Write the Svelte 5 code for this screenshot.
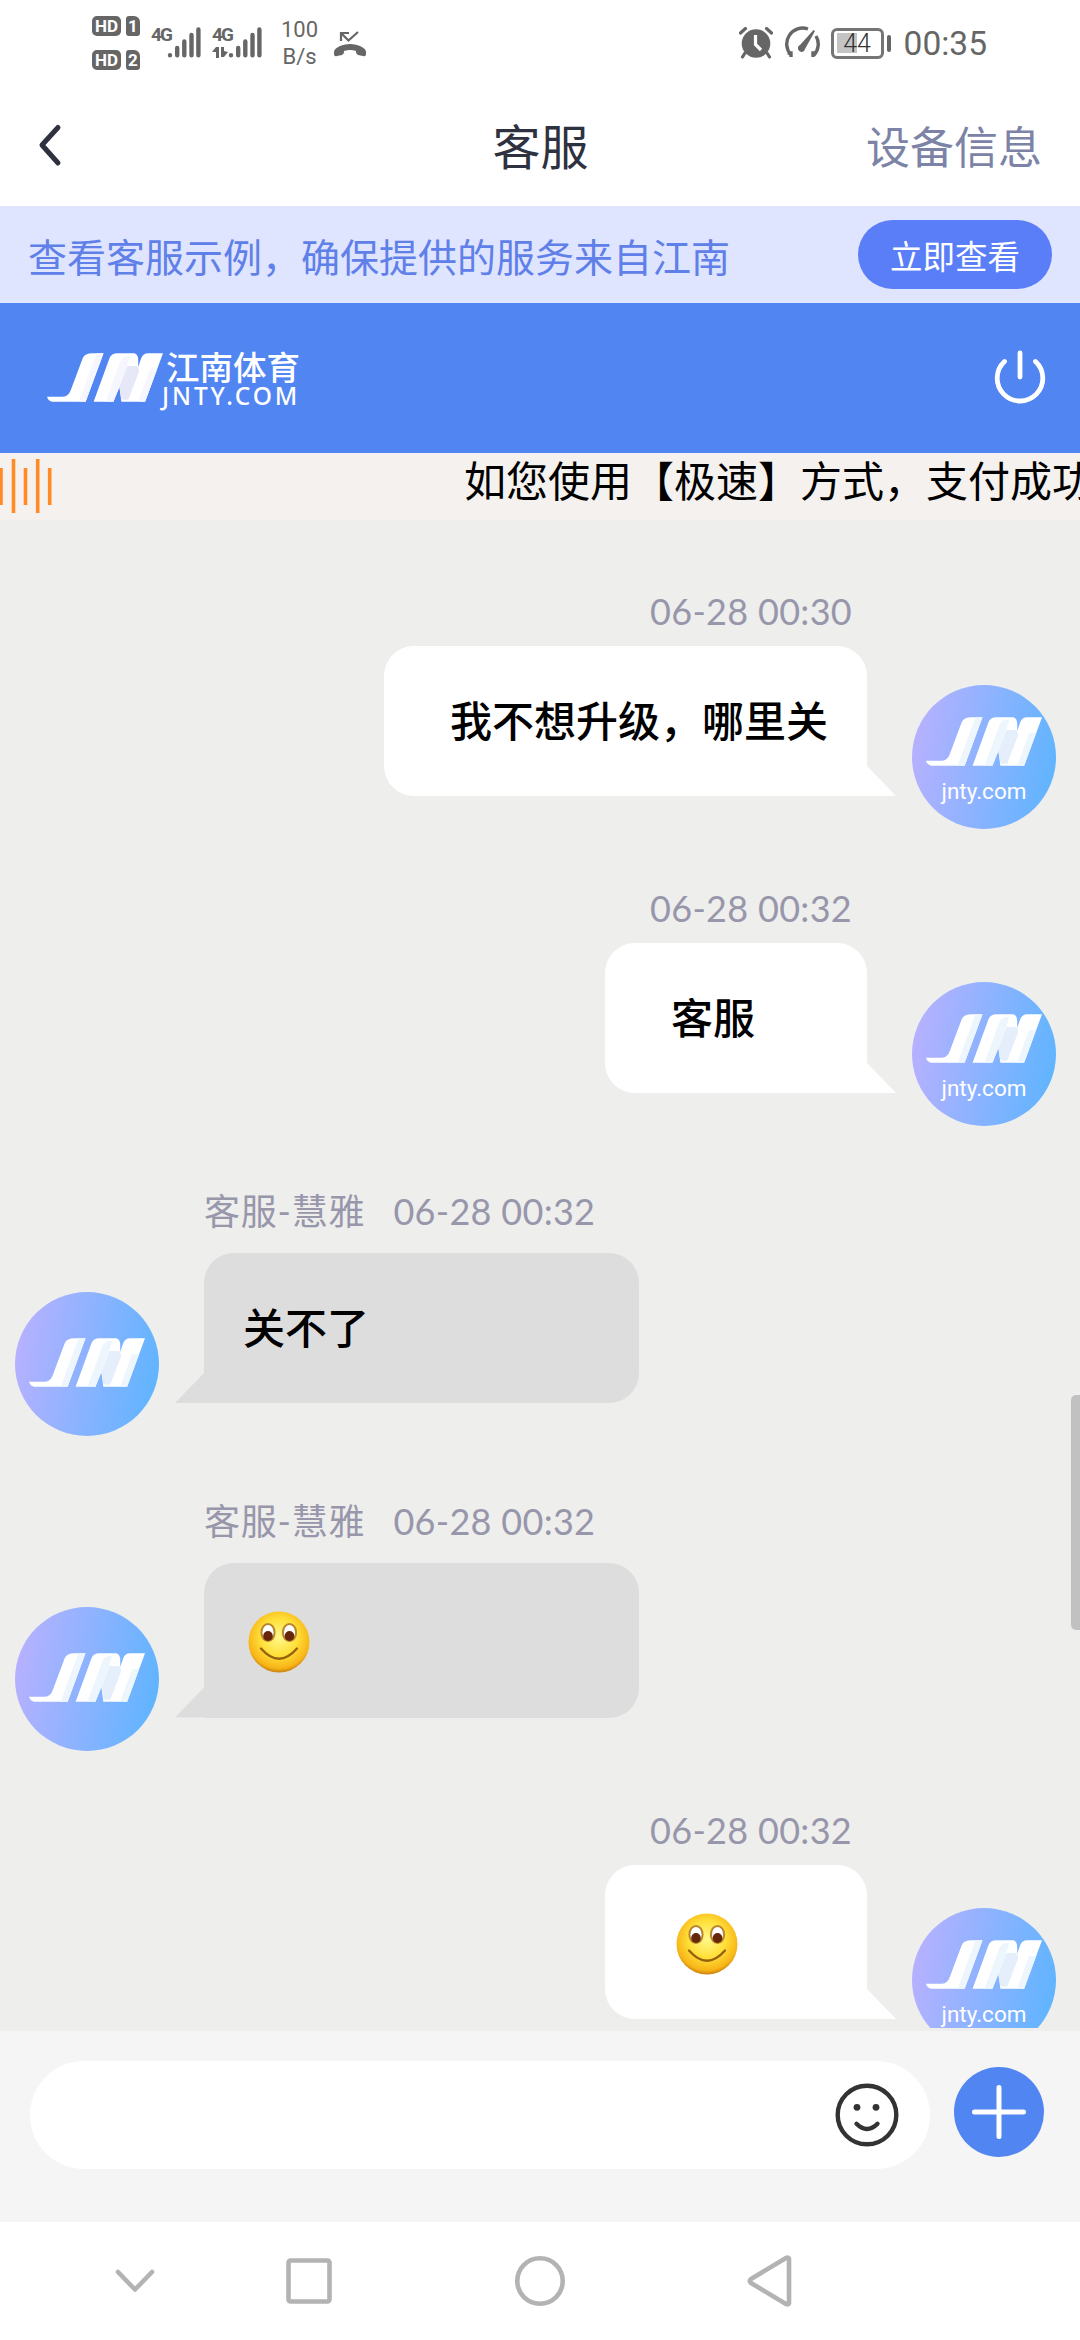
<script lang="ts">
    type Message = {
        role: "user" | "agent"
        name?: string
        time: string
        text?: string
        smile?: boolean
    }

    const messages: Message[] = $state([
        { role: "user", time: "06-28 00:30", text: "我不想升级，哪里关" },
        { role: "user", time: "06-28 00:32", text: "客服" },
        { role: "agent", name: "客服-慧雅", time: "06-28 00:32", text: "关不了" },
        { role: "agent", name: "客服-慧雅", time: "06-28 00:32", smile: true },
        { role: "user", time: "06-28 00:32", smile: true }
    ])
    let draft: string = $state("")
</script>

{#snippet mark()}
    <svg class="mark" viewBox="0 0 118 50">
        <path fill="#fff" d="M46 0H57L39 49H5Q1 48 0 44H16Q22 43 24 37L36 5Q38 0 46 0Z" />
        <path class="shade" d="M50 0H57L39 49H32Z" />
        <path fill="#fff" d="M71 0H88Q92 1 92 7V14L95 5Q97 0 102 0H117L99 49H75L73 34L67 49H47L63 5Q65 0 71 0Z" />
        <path class="shade" d="M84 3L73 34L67 49H59L74 8Q77 2 84 3Z" />
        <path class="fold" d="M90 13L92 14L93 18L82 47H77L75 46L73 34L81 13Z" />
        <path class="shade" d="M111 16L99 49H92L104 16Z" />
    </svg>
{/snippet}

{#snippet smile()}
    <svg class="smile" viewBox="0 0 62 62">
        <defs>
            <radialGradient id="face" cx=".5" cy=".42" r=".6">
                <stop offset="0" stop-color="#fff88c" />
                <stop offset=".5" stop-color="#ffe03a" />
                <stop offset=".85" stop-color="#f8b516" />
                <stop offset="1" stop-color="#bd720c" />
            </radialGradient>
        </defs>
        <circle cx="31" cy="31" r="30.5" fill="url(#face)" />
        {#each [20, 41.5] as cx}
            <ellipse {cx} cy="21.5" rx="6.6" ry="8.6" fill="#fff" stroke="#b8862c" stroke-width="2" />
            <ellipse {cx} cy="25" rx="4.8" ry="5" fill="#66260a" />
        {/each}
        <path d="M13 37.5Q31 58 49 37.5" fill="none" stroke="#96600f" stroke-width="2.3" stroke-linecap="round" />
    </svg>
{/snippet}

{#snippet signal()}
    <svg width="34" height="31" viewBox="0 0 34 31" stroke="#666" stroke-width="4.4" stroke-linecap="round">
        <path d="M3 28.2V28.3M10.2 21V28.3M17.3 14.5V28.3M24.5 8V28.3M31.4 2.5V28.3" />
    </svg>
{/snippet}

<main>
    <div class="status">
        <div class="hd-list">
            {#each [1, 2] as sim}
                <div class="hd-row"><span class="hd">HD</span><span class="sim">{sim}</span></div>
            {/each}
        </div>
        <div class="net"><span>4G</span>{@render signal()}</div>
        <div class="net">
            <span class="net-label">
                4G
                <svg width="16" height="11" viewBox="0 0 16 11" fill="#666"><path d="M4 0H7V11H4V5H0ZM9 0H12V4L16 5L12 10H9Z" /></svg>
            </span>
            {@render signal()}
        </div>
        <div class="speed">100<br>B/s</div>
        <svg class="missed" width="34" height="28" viewBox="0 0 34 28" fill="none" stroke="#666">
            <path d="M8 10V2H16M8 2L15.5 9.5L25 1" stroke-width="2.2" />
            <path fill="#666" stroke="none" d="M1 21C1 17 9 13 17 13S33 17 33 21V23Q33 26 30 25L25 24Q23 23 23 21V20Q17 18 11 20V21Q11 23 9 24L4 25Q1 26 1 23Z" />
        </svg>
        <div class="status-right">
            <svg width="34" height="32" viewBox="0 0 34 32" fill="none" stroke="#666">
                <circle cx="17" cy="16.5" r="14.3" fill="#666" stroke="none" />
                <path d="M1.5 6L6.5 1.5M32.5 6L27.5 1.5" stroke="#fff" stroke-width="7" />
                <path d="M1.5 6L6.5 1.5M32.5 6L27.5 1.5M6 26L3.5 30M28 26L30.5 30" stroke-width="3.2" stroke-linecap="round" />
                <path d="M16.5 8V17.5L22 23" stroke="#fff" stroke-width="3.2" />
            </svg>
            <svg width="38" height="34" viewBox="0 0 38 34" fill="none" stroke="#666" stroke-width="3.4">
                <path d="M8 31V27H4.5M8 29A16 16 0 0 1 25 3M33 10A16 16 0 0 1 31 29M30 31V27H33.5" />
                <path d="M32 5L22 23A3.6 3.6 0 1 1 17 19L30.5 4Z" fill="#666" stroke="none" />
            </svg>
            <div class="battery"><span>44</span></div>
            <span class="clock">00:35</span>
        </div>
    </div>

    <header>
        <svg class="back" width="28" height="48" viewBox="0 0 28 48" fill="none" stroke="#2e3140" stroke-width="5" stroke-linecap="round" stroke-linejoin="round">
            <path d="M22 7.5L6 25L22 43" />
        </svg>
        <h1>客服</h1>
        <a class="device" href="#device">设备信息</a>
    </header>

    <div class="tip">
        <span>查看客服示例，确保提供的服务来自江南</span>
        <button>立即查看</button>
    </div>

    <div class="brand">
        {@render mark()}
        <div class="brand-name">
            <span class="cn">江南体育</span>
            <span class="en">JNTY.COM</span>
        </div>
        <svg class="power" width="56" height="60" viewBox="0 0 56 60" fill="none" stroke="#fff" stroke-width="4.8" stroke-linecap="round">
            <path d="M12.5 13.5A22.8 22.8 0 1 0 43.5 13.5M28 5V29" />
        </svg>
    </div>

    <div class="notice">
        <svg width="54" height="56" viewBox="0 0 54 56" stroke="#ff8b26" stroke-width="3.6">
            <path d="M1 10V47M13.5 1V55M25.5 10V47M37.7 1V55M49.7 10V47" />
        </svg>
        <span>如您使用【极速】方式，支付成功</span>
    </div>

    <div class="chat">
        {#each messages as message}
            <div class="{message.role} message">
                <div class="meta">
                    {#if message.name}<span class="name">{message.name}</span>{/if}
                    <span class="time">{message.time}</span>
                </div>
                <div class="row">
                    <div class="avatar">
                        {@render mark()}
                        {#if message.role === "user"}<span>jnty.com</span>{/if}
                    </div>
                    <div class="bubble" class:picture={message.smile}>
                        {#if message.smile}
                            {@render smile()}
                        {:else}
                            {message.text}
                        {/if}
                    </div>
                </div>
            </div>
        {/each}
        <div class="scrollbar"></div>
    </div>

    <form class="composer">
        <div class="field">
            <input bind:value={draft} aria-label="消息">
            <svg width="64" height="64" viewBox="0 0 64 64" fill="none" stroke="#333" stroke-width="4.4" stroke-linecap="round">
                <circle cx="32" cy="32" r="29.3" />
                <path d="M21.5 40.8Q32 51.2 42.5 40.8" />
                <circle cx="22" cy="24.3" r="3.4" fill="#333" stroke="none" />
                <circle cx="41" cy="24.3" r="3.4" fill="#333" stroke="none" />
            </svg>
        </div>
        <button type="button" class="more" aria-label="更多">
            <svg width="56" height="56" viewBox="0 0 56 56" stroke="#fff" stroke-width="5" stroke-linecap="round">
                <path d="M28 3.5V52.5M3.5 28H52.5" />
            </svg>
        </button>
    </form>

    <nav>
        <svg viewBox="0 0 52 52"><path d="M9 17L26 34.5L43 17" /></svg>
        <svg viewBox="0 0 52 52"><rect x="5.5" y="5.5" width="41" height="41" rx="2" /></svg>
        <svg viewBox="0 0 52 52"><circle cx="26" cy="26" r="22.7" /></svg>
        <svg viewBox="0 0 52 52"><path d="M45 3.5V48.5Q44 50 42 49L7 28Q4.5 26 7 24L42 3Q44 2 45 3.5Z" /></svg>
    </nav>
</main>

<style>
    :global(body) {
        background: #fff;
    }

    main {
        width: 1080px;
        height: 2340px;
        display: flex;
        flex-direction: column;
        overflow: hidden;
        font-family: Roboto, "Noto Sans CJK SC", sans-serif;
    }

    svg {
        display: block;
        flex: none;
    }

    button {
        border: none;
        padding: 0;
        font-family: inherit;
    }

    /* status bar */
    .status {
        height: 86px;
        box-sizing: border-box;
        padding: 0 93px 0 92px;
        display: flex;
        align-items: center;
        color: #666;
    }

    .hd-list {
        display: flex;
        flex-direction: column;
        gap: 14px;
        margin-right: 11px;
        margin-top: -1px;
    }

    .hd-row {
        display: flex;
        gap: 5px;
    }

    .hd,
    .sim {
        height: 20px;
        background: #666;
        border-radius: 5px;
        color: #fff;
        font-size: 17px;
        font-weight: 700;
        line-height: 20px;
        text-align: center;
    }

    .hd {
        width: 29px;
    }

    .sim {
        width: 14px;
        border-radius: 3px 6px 3px 3px;
    }

    .net {
        display: flex;
        align-items: flex-start;
        height: 32px;
        margin-right: 11px;
        font-size: 19px;
        font-weight: 700;
        line-height: 16px;
        letter-spacing: -2px;
    }

    .net > span {
        width: 16px;
    }

    .net-label svg {
        margin-top: 4px;
    }

    .speed {
        margin-left: 8px;
        margin-right: 15px;
        font-size: 22px;
        line-height: 27px;
        text-align: center;
    }

    .missed {
        margin-top: 3px;
    }

    .status-right {
        display: flex;
        align-items: center;
        margin-left: auto;
        gap: 10px;
    }

    .battery {
        position: relative;
        width: 53px;
        height: 31px;
        box-sizing: border-box;
        border: 3px solid #757575;
        border-radius: 6px;
        background: linear-gradient(#c4c4c4, #c4c4c4) 3px 2px / 20px 20px no-repeat;
        font-size: 25px;
        font-weight: 300;
        line-height: 26px;
        text-align: center;
        color: #333;
        margin-right: 10px;
    }

    .battery::after {
        content: "";
        position: absolute;
        right: -10px;
        top: 4px;
        width: 4px;
        height: 17px;
        border-radius: 2px;
        background: #666;
    }

    .clock {
        font-size: 33.5px;
    }

    /* title bar */
    header {
        height: 120px;
        box-sizing: border-box;
        padding: 0 38px 4px 36px;
        display: grid;
        grid-template-columns: 1fr auto 1fr;
        align-items: center;
    }

    h1 {
        margin: 0;
        padding: 10px 0 0 3px;
        font-size: 48px;
        font-weight: 400;
        line-height: 60px;
        color: #2e3140;
    }

    .device {
        justify-self: end;
        padding-top: 9px;
        font-size: 44px;
        line-height: 60px;
        color: #7c83a6;
        text-decoration: none;
    }

    .tip {
        height: 97px;
        box-sizing: border-box;
        padding: 0 28px;
        display: flex;
        align-items: center;
        justify-content: space-between;
        background: #dfe4ff;
        color: #5f80e8;
        font-size: 39px;
    }

    .tip button {
        width: 194px;
        height: 69px;
        border-radius: 35px;
        background: #5a7ef8;
        color: #fff;
        font-size: 32.5px;
    }

    .brand {
        height: 150px;
        box-sizing: border-box;
        padding: 0 32px 0 47px;
        display: flex;
        align-items: center;
        background: #5085f2;
    }

    .mark {
        width: 117px;
        height: 50px;
    }

    .shade {
        fill: #edf5fd;
    }

    .fold {
        fill: #e4effb;
    }

    .brand .shade {
        fill: #f6f6fe;
    }

    .brand .fold {
        fill: #e6e8f8;
    }

    .brand-name {
        display: flex;
        flex-direction: column;
        margin-left: -2px;
        color: #fff;
    }

    .cn {
        padding-left: 4px;
        font-size: 33.5px;
        font-weight: 500;
        line-height: 34px;
    }

    .en {
        font-family: "Noto Sans", sans-serif;
        font-size: 24.5px;
        font-weight: 500;
        line-height: 19px;
        letter-spacing: 2.9px;
    }

    .power {
        margin-left: auto;
    }

    .notice {
        height: 67px;
        display: flex;
        align-items: flex-start;
        background: #f4f1ee;
        color: #000;
        font-size: 42px;
        line-height: 60px;
        white-space: nowrap;
        overflow: hidden;
    }

    .notice svg {
        margin: 5px 410px 0 0;
    }

    /* messages */
    .chat {
        position: relative;
        height: 1508px;
        box-sizing: border-box;
        padding: 58px 24px 0 15px;
        display: flex;
        flex-direction: column;
        gap: 46px;
        overflow: hidden;
        background: #eeeeec;
    }

    .message {
        flex: none;
        display: flex;
        flex-direction: column;
    }

    .meta {
        height: 68px;
        line-height: 66px;
        padding-right: 204px;
        font-family: Lato, "Noto Sans CJK SC", sans-serif;
        font-size: 36px;
        letter-spacing: 0.3px;
        color: #9896ab;
        display: flex;
        justify-content: flex-end;
        gap: 28px;
    }

    .agent .meta {
        height: 81px;
        line-height: 78px;
        padding: 0 0 0 189px;
        justify-content: flex-start;
    }

    .name {
        letter-spacing: 0.8px;
    }

    .row {
        display: flex;
        flex-direction: row-reverse;
        align-items: flex-end;
        gap: 45px;
    }

    .agent .row {
        flex-direction: row;
    }

    .avatar {
        width: 144px;
        height: 144px;
        box-sizing: border-box;
        padding-bottom: 2px;
        border-radius: 50%;
        display: flex;
        flex-direction: column;
        align-items: center;
        justify-content: center;
        background: linear-gradient(100deg, #b8b1ff 5%, #62b4ff 92%);
        color: #fff;
        font-size: 22.5px;
        line-height: 26px;
    }

    .avatar span {
        margin-top: 11px;
    }

    .user .avatar {
        justify-content: flex-start;
        padding-top: 32px;
    }

    .bubble {
        position: relative;
        min-width: 262px;
        height: 150px;
        box-sizing: border-box;
        margin-bottom: 33px;
        padding: 0 39px 0 66px;
        border-radius: 30px 30px 0 30px;
        background: #fff;
        color: #000;
        font-size: 42px;
        font-weight: 500;
        line-height: 154px;
    }

    .agent .bubble {
        width: 435px;
        padding: 0 39px;
        border-radius: 30px 30px 30px 0;
        background: #ddd;
    }

    .bubble.picture {
        height: 154.5px;
        padding-top: 48px;
    }

    .bubble::after {
        content: "";
        position: absolute;
        left: 100%;
        bottom: 0;
        width: 29px;
        height: 30px;
        background: inherit;
        clip-path: polygon(0 0, 100% 100%, 0 100%);
    }

    .agent .bubble::after {
        left: auto;
        right: 100%;
        clip-path: polygon(100% 0, 100% 100%, 0 100%);
    }

    .smile {
        width: 62px;
        height: 62px;
        margin-left: 5px;
    }

    .scrollbar {
        position: absolute;
        right: 0;
        top: 875px;
        width: 9px;
        height: 235px;
        border-radius: 5px 0 0 5px;
        background: #c1c1c1;
    }

    .composer {
        height: 194px;
        box-sizing: border-box;
        padding: 30px 36px 0 30px;
        border-top: 3px solid #eeeeec;
        display: flex;
        align-items: flex-start;
        gap: 24px;
        background: #f5f5f5;
    }

    .field {
        flex: 1;
        height: 108px;
        box-sizing: border-box;
        padding: 0 31px 0 40px;
        border-radius: 54px;
        display: flex;
        align-items: center;
        background: #fff;
    }

    input {
        flex: 1;
        border: none;
        outline: none;
        background: none;
        font-size: 42px;
    }

    .more {
        width: 90px;
        height: 90px;
        margin-top: 6px;
        border-radius: 50%;
        display: flex;
        align-items: center;
        justify-content: center;
        background: #5085f2;
    }

    nav {
        height: 118px;
        box-sizing: border-box;
        padding-left: 109px;
        display: grid;
        grid-template-columns: 174px 231px 230px 52px;
        align-items: center;
        background: #fff;
    }

    nav svg {
        width: 52px;
        height: 52px;
        fill: none;
        stroke: #b3b3b3;
        stroke-width: 4.6;
        stroke-linecap: round;
        stroke-linejoin: round;
    }
</style>
